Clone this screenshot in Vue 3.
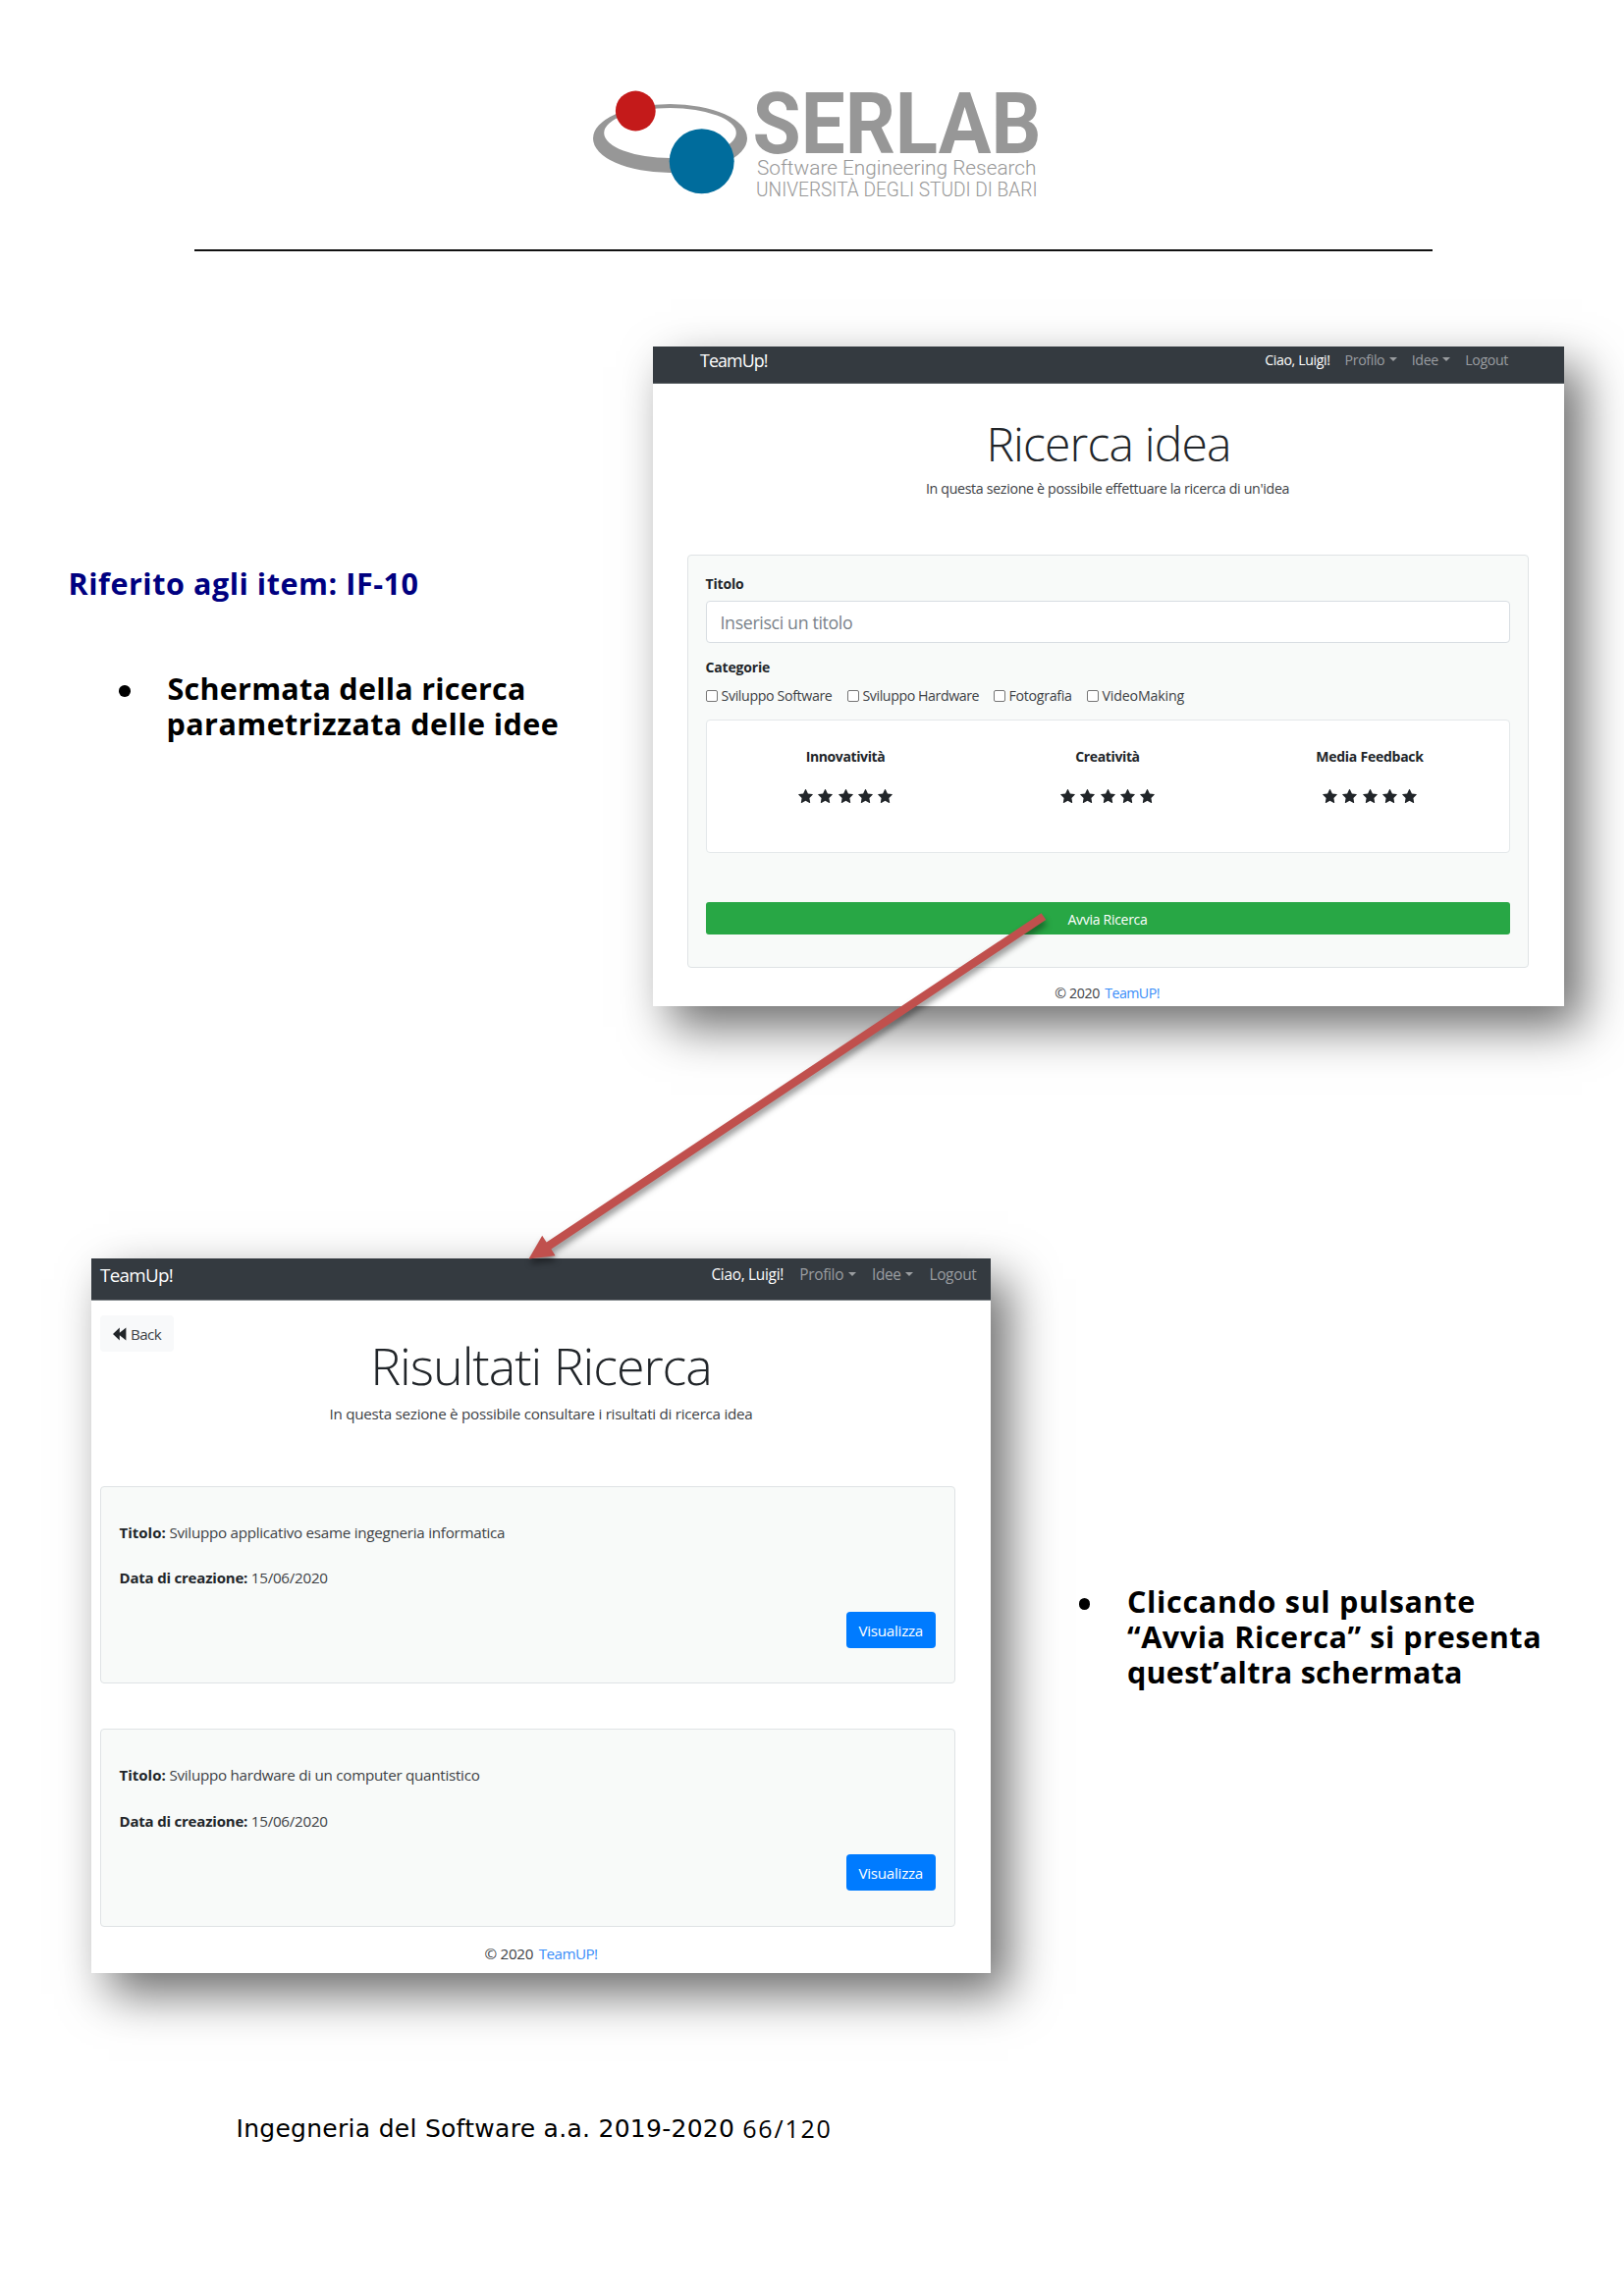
<script setup>
const menu = [
  { label: 'Ciao, Luigi!', active: true },
  { label: 'Profilo', caret: true },
  { label: 'Idee', caret: true },
  { label: 'Logout' },
]
const categories = ['Sviluppo Software', 'Sviluppo Hardware', 'Fotografia', 'VideoMaking']
const ratings = ['Innovatività', 'Creatività', 'Media Feedback']
const results = [
  { title: 'Sviluppo applicativo esame ingegneria informatica', date: '15/06/2020' },
  { title: 'Sviluppo hardware di un computer quantistico', date: '15/06/2020' },
]
</script>

<template>
  <div class="page">
    <header class="head">
      <svg class="logo" viewBox="600 88 462 120" width="462" height="120">
        <path
          fill="#979797"
          fill-rule="evenodd"
          d="M604 141a78.500 35 0 1 0 157 0a78.500 35 0 1 0 -157 0zM615.200 135.500a67.300 25.400 0 1 0 134.600 0a67.300 25.400 0 1 0 -134.600 0z"
        />
        <circle cx="647.300" cy="113" r="20.400" fill="#c41a1a" />
        <circle cx="714.700" cy="164.300" r="33" fill="#006c9c" />
        <g font-family="Roboto, sans-serif" fill="#979797">
          <text x="766.500" y="155.800" font-size="86.500" font-weight="700" textLength="294" lengthAdjust="spacingAndGlyphs">SERLAB</text>
          <text x="771" y="178.400" font-size="21" font-weight="300" textLength="284.500" lengthAdjust="spacingAndGlyphs">Software Engineering Research</text>
          <text x="770" y="199.800" font-size="19.400" font-weight="300" textLength="286.500" lengthAdjust="spacingAndGlyphs">UNIVERSITÀ DEGLI STUDI DI BARI</text>
        </g>
      </svg>
      <hr class="rule" />
    </header>

    <section class="row first">
      <aside class="note note-left">
        <h2 class="ref">Riferito agli item: IF-10</h2>
        <div class="item">
          <i class="dot"></i>
          <p>
            <span class="l1">Schermata della ricerca</span><br />
            <span class="l2">parametrizzata delle idee</span>
          </p>
        </div>
      </aside>

      <div class="win win-a">
        <nav class="bar">
          <span class="brand">TeamUp!</span>
          <span v-for="m in menu" :key="m.label" class="link" :class="{ on: m.active }">
            {{ m.label }}<i v-if="m.caret" class="caret"></i>
          </span>
        </nav>
        <h1>Ricerca idea</h1>
        <p class="sub">In questa sezione è possibile effettuare la ricerca di un'idea</p>
        <form class="form" @submit.prevent>
          <label class="lbl">Titolo</label>
          <div class="input">Inserisci un titolo</div>
          <label class="lbl cat">Categorie</label>
          <div class="checks">
            <span v-for="(c, i) in categories" :key="c" :class="'c' + i"><i class="box"></i><em>{{ c }}</em></span>
          </div>
          <div class="ratings">
            <div v-for="r in ratings" :key="r" class="rating">
              <b>{{ r }}</b>
              <div class="stars">
                <svg v-for="n in 5" :key="n" viewBox="0 32 1664 1587" width="15" height="14">
                  <path
                    fill="#212529"
                    d="M1664 647q0 22-26 48l-363 354 86 500q1 7 1 20 0 21-10.500 35.500t-30.500 14.500q-19 0-40-12l-449-236-449 236q-22 12-40 12-21 0-31.500-14.500t-10.500-35.500q0-6 2-20l86-500-364-354q-25-27-25-48 0-37 56-46l502-73 225-455q19-41 49-41t49 41l225 455 502 73q56 9 56 46z"
                  />
                </svg>
              </div>
            </div>
          </div>
          <div class="go">Avvia Ricerca</div>
        </form>
        <footer class="foot">© 2020 <a>TeamUP!</a></footer>
      </div>
    </section>

    <section class="row second">
      <div class="win win-b">
        <nav class="bar">
          <span class="brand">TeamUp!</span>
          <span v-for="m in menu" :key="m.label" class="link" :class="{ on: m.active }">
            {{ m.label }}<i v-if="m.caret" class="caret"></i>
          </span>
        </nav>
        <div class="back">
          <svg viewBox="0 0 14 14" width="14" height="14">
            <path fill="#212529" d="M0 7L6.800 .4V5.800L13.400 .4V13.600L6.800 8.200V13.600Z" />
          </svg>
          <span>Back</span>
        </div>
        <h1>Risultati Ricerca</h1>
        <p class="sub">In questa sezione è possibile consultare i risultati di ricerca idea</p>
        <div class="cards">
          <article v-for="r in results" :key="r.title" class="card">
            <p><b class="bt">Titolo:</b> {{ r.title }}</p>
            <p><b>Data di creazione:</b> {{ r.date }}</p>
            <div class="view">Visualizza</div>
          </article>
        </div>
        <footer class="foot">© 2020 <a>TeamUP!</a></footer>
      </div>

      <aside class="note note-right">
        <div class="item">
          <i class="dot"></i>
          <p>
            <span class="r1">Cliccando sul pulsante</span><br />
            <span class="r2">“Avvia Ricerca” si presenta</span><br />
            <span class="r3">quest’altra schermata</span>
          </p>
        </div>
      </aside>
    </section>

    <footer class="pagefoot"><span>Ingegneria del Software a.a. 2019-2020</span><span class="num">66/120</span></footer>

    <svg class="arrow" viewBox="520 910 580 400" width="580" height="400">
      <path fill="#c0504d" d="M1060.500 930.200L1065.300 937L561.400 1272.400L565.600 1279.200L538.500 1282.500L552.200 1258.800L556.600 1265.600Z" />
    </svg>
  </div>
</template>

<style>
body {
  margin: 0;
  background: #fff;
}
</style>

<style scoped>
.page {
  position: relative;
  width: 1654px;
  height: 2339px;
  overflow: hidden;
  background: #fff;
  font-family: "Open Sans", "Noto Sans", sans-serif;
  color: #3d4145;
}
h1,
h2,
p {
  margin: 0;
}
i,
em {
  font-style: normal;
}
.head {
  height: 256px;
  padding-top: 88px;
  box-sizing: border-box;
}
.logo {
  display: block;
  margin-left: 600px;
}
.rule {
  width: 1261px;
  height: 2px;
  margin: 46px 0 0 198px;
  border: 0;
  background: #111;
}
.row {
  display: flex;
}
.first {
  margin-top: 97px;
}
.second {
  margin-top: 257px;
  padding-left: 93px;
}

/* document notes */
.note {
  box-sizing: border-box;
  font-weight: 700;
  font-size: 30.500px;
  line-height: 36px;
  color: #000;
  white-space: nowrap;
}
.note-left {
  width: 665px;
  padding: 223px 0 0 69.500px;
}
.note-right {
  padding: 331px 0 0 89.500px;
}
.ref {
  font-size: inherit;
  font-weight: inherit;
  line-height: inherit;
  color: #000080;
  letter-spacing: 0.550px;
}
.item {
  display: flex;
}
.note-left .item {
  margin: 71px 0 0 51.500px;
}
.dot {
  width: 11.500px;
  height: 11.500px;
  margin: 15px 38px 0 0;
  border-radius: 50%;
  background: #000;
}
.l1 { letter-spacing: 0.250px; }
.l2 { letter-spacing: 0.440px; margin-left: -1px; }
.r1 { letter-spacing: 0.680px; }
.r2 { letter-spacing: 0.600px; }
.r3 { letter-spacing: 0.260px; }

/* screens */
.win {
  box-sizing: border-box;
  background: #fff;
  box-shadow: 18px 21px 46px rgba(0, 0, 0, 0.58);
  white-space: nowrap;
}
.win-a {
  width: 928px;
  height: 672px;
  font-size: 14.200px;
  line-height: 20px;
}
.win-b {
  width: 916px;
  height: 728px;
  font-size: 15.200px;
  line-height: 20px;
  letter-spacing: -0.270px;
}
.bar {
  display: flex;
  align-items: center;
  box-sizing: border-box;
  background: #343a40;
}
.win-a .bar {
  height: 38px;
  gap: 15px;
  padding: 0 57px 10px 48px;
  border-bottom: 1px solid #63686c;
  letter-spacing: -0.380px;
}
.win-b .bar {
  height: 43px;
  gap: 16.200px;
  padding: 0 14.500px 9px 9px;
  border-bottom: 1px solid #7d8286;
  font-size: 15.400px;
  letter-spacing: -0.290px;
}
.brand {
  margin-right: auto;
  color: #fff;
}
.win-a .brand {
  font-size: 17.800px;
  letter-spacing: -0.870px;
}
.win-b .brand {
  font-size: 18.800px;
  letter-spacing: -0.700px;
}
.link {
  display: flex;
  align-items: center;
  color: #9a9da0;
}
.link.on {
  color: #fff;
}
.caret {
  margin: -2px 0 0 4.500px;
  border: 4px solid transparent;
  border-top: 4.500px solid #9a9da0;
  border-bottom: 0;
}
h1 {
  font-weight: 300;
  text-align: center;
  color: #212529;
}
.win-a h1 {
  margin-top: 31.500px;
  font-size: 48px;
  line-height: 58px;
  letter-spacing: -0.830px;
}
.win-b h1 {
  margin-top: -16.500px;
  font-size: 52px;
  line-height: 60px;
  letter-spacing: -1.050px;
}
.sub {
  text-align: center;
}
.win-a .sub {
  margin-top: 7px;
  padding-right: 2px;
  letter-spacing: -0.320px;
}
.win-b .sub {
  margin-top: 9.500px;
  letter-spacing: -0.260px;
}
.form {
  box-sizing: border-box;
  width: 857px;
  height: 420.500px;
  margin: 57.500px 0 0 34.500px;
  padding: 18.600px 18px 0;
  border: 1px solid #dfe3e5;
  border-radius: 4px;
  background: #f8faf9;
}
.lbl {
  display: block;
  font-size: 14px;
  font-weight: 700;
  color: #212529;
  letter-spacing: -0.180px;
}
.input {
  box-sizing: border-box;
  height: 43px;
  margin: 7.400px 0 15.400px;
  padding: 1px 14px 0;
  border: 1px solid #d8dde2;
  border-radius: 4px;
  background: #fff;
  font-size: 17.800px;
  line-height: 41px;
  letter-spacing: -0.360px;
  color: #7a828a;
}
.checks {
  display: flex;
  margin-top: 9px;
}
.checks span {
  display: flex;
  align-items: center;
}
.c0 { width: 144px; letter-spacing: -0.360px; }
.c1 { width: 149px; letter-spacing: -0.420px; }
.c2 { width: 95px; letter-spacing: -0.300px; }
.c3 { letter-spacing: -0.150px; }
.box {
  box-sizing: border-box;
  width: 12px;
  height: 12px;
  margin-right: 4px;
  border: 1px solid #767676;
  border-radius: 2px;
  background: #fff;
}
.ratings {
  display: flex;
  box-sizing: border-box;
  height: 135.500px;
  margin-top: 14px;
  padding: 26.500px 8px 0;
  border: 1px solid #e4e8ea;
  border-radius: 4px;
  background: #fff;
}
.rating {
  flex: 1;
  text-align: center;
}
.rating b {
  display: block;
  font-size: 14px;
  color: #212529;
  letter-spacing: -0.380px;
}
.rating:last-child b {
  letter-spacing: -0.250px;
}
.stars {
  display: flex;
  justify-content: center;
  gap: 5.300px;
  margin-top: 23px;
}
.go {
  height: 31.500px;
  margin-top: 50px;
  padding-top: 2px;
  border-radius: 3px;
  background: #28a745;
  color: #fff;
  font-size: 14px;
  line-height: 31.500px;
  letter-spacing: -0.280px;
  text-align: center;
}
.foot {
  text-align: center;
}
.foot a {
  color: #3a8df8;
}
.win-a .foot {
  margin-top: 16px;
  padding-right: 3px;
  letter-spacing: -0.360px;
}
.win-a .foot a,
.win-b .foot a {
  margin-left: 2px;
  letter-spacing: -0.550px;
}
.back {
  display: flex;
  align-items: center;
  box-sizing: border-box;
  width: 75px;
  height: 37px;
  margin: 15px 0 0 9px;
  padding: 1px 0 0 13px;
  gap: 4px;
  border-radius: 4px;
  background: #f8f9fa;
  letter-spacing: -0.600px;
}
.cards {
  display: flex;
  flex-direction: column;
  gap: 46.300px;
  width: 871px;
  margin: 63.500px 0 0 9px;
}
.card {
  display: flex;
  flex-direction: column;
  box-sizing: border-box;
  height: 201.500px;
  padding: 36px 19px 0 18.500px;
  border: 1px solid #dfe3e5;
  border-radius: 4px;
  background: #f8faf9;
}
.card p + p {
  margin-top: 26.500px;
}
.card b {
  font-size: 15px;
  color: #212529;
  letter-spacing: -0.200px;
}
.card .bt {
  letter-spacing: 0;
}
.view {
  align-self: flex-end;
  width: 91.500px;
  height: 36px;
  margin-top: 24.500px;
  padding-top: 1px;
  border-radius: 4px;
  background: #007bff;
  color: #fff;
  line-height: 36px;
  text-align: center;
}
.win-b .foot {
  margin-top: 17.500px;
  letter-spacing: -0.300px;
}
.pagefoot {
  display: flex;
  gap: 8px;
  margin: 144px 0 0 240.500px;
  font: 25px/30px "DejaVu Sans", sans-serif;
  letter-spacing: 0.280px;
  color: #000;
}
.num {
  font-family: "Open Sans", sans-serif;
  line-height: 28px;
  letter-spacing: 1.800px;
}

/* connector between the two screens */
.arrow {
  position: absolute;
  left: 520px;
  top: 910px;
  filter: drop-shadow(1px 5px 3px rgba(0, 0, 0, 0.4));
}
</style>
